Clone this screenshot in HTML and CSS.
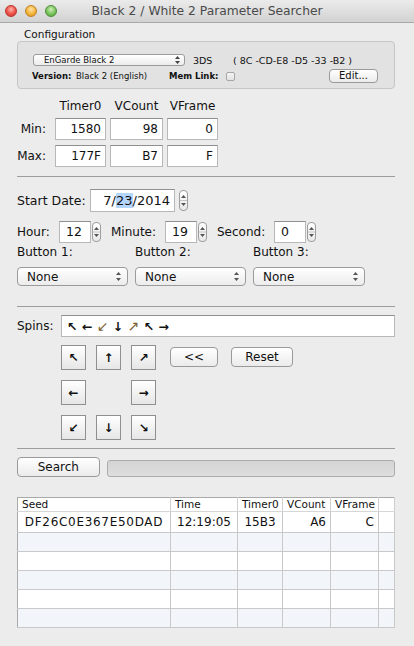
FILE: index.html
```html
<!DOCTYPE html>
<html lang="en">
<head>
    <meta charset="UTF-8">
    <meta name="viewport" content="width=device-width, initial-scale=1.0">
    <title>Black 2 / White 2 Parameter Searcher</title>
    <link rel="stylesheet" href="styles.css">
</head>
<body>
    <div class="window">
        <div class="titlebar">
            <div class="lights">
                <span class="light red"></span>
                <span class="light yellow"></span>
                <span class="light green"></span>
            </div>
            <div class="title">Black 2 / White 2 Parameter Searcher</div>
        </div>

        <div class="content">
            <!-- Configuration -->
            <div class="config-label">Configuration</div>
            <div class="config-box">
                <div class="config-row">
                    <div class="popup mini">
                        <span>EnGarde Black 2</span>
                        <svg class="updown" width="5" height="8" viewBox="0 0 5 8"><path d="M2.5 0 L5 3 L0 3 Z M0 5 L5 5 L2.5 8 Z" fill="#444"/></svg>
                    </div>
                    <span class="ds">3DS</span>
                    <span class="mac">( 8C -CD-E8 -D5 -33 -B2 )</span>
                </div>
                <div class="config-row second">
                    <span class="bold version-label">Version:</span>
                    <span class="version-value">Black 2 (English)</span>
                    <span class="bold mem-label">Mem Link:</span>
                    <span class="checkbox"></span>
                    <button class="btn mini edit">Edit...</button>
                </div>
            </div>

            <!-- Timer0 / VCount / VFrame -->
            <div class="timers">
                <span></span>
                <span class="head">Timer0</span>
                <span class="head">VCount</span>
                <span class="head">VFrame</span>

                <span class="row-label">Min:</span>
                <span class="field num">1580</span>
                <span class="field num">98</span>
                <span class="field num">0</span>

                <span class="row-label">Max:</span>
                <span class="field num">177F</span>
                <span class="field num">B7</span>
                <span class="field num">F</span>
            </div>

            <div class="sep"></div>

            <!-- Date and time -->
            <div class="row date-row">
                <span class="lbl date-lbl">Start Date:</span>
                <span class="field date">7/<span class="sel">23</span>/2014</span>
                <span class="stepper tall"><svg width="7" height="19" viewBox="0 0 7 19"><path d="M3.5 4 L6 7 L1 7 Z M1 12 L6 12 L3.5 15 Z" fill="#555"/><path d="M0 9.5 H7" stroke="#c4c4c4"/></svg></span>
            </div>

            <div class="row time-row">
                <span class="lbl hour-lbl">Hour:</span>
                <span class="field small">12</span>
                <span class="stepper"><svg width="7" height="18" viewBox="0 0 7 18"><path d="M3.5 4 L6 7 L1 7 Z M1 11 L6 11 L3.5 14 Z" fill="#555"/><path d="M0 9 H7" stroke="#c4c4c4"/></svg></span>
                <span class="lbl minute-lbl">Minute:</span>
                <span class="field small">19</span>
                <span class="stepper"><svg width="7" height="18" viewBox="0 0 7 18"><path d="M3.5 4 L6 7 L1 7 Z M1 11 L6 11 L3.5 14 Z" fill="#555"/><path d="M0 9 H7" stroke="#c4c4c4"/></svg></span>
                <span class="lbl second-lbl">Second:</span>
                <span class="field small">0</span>
                <span class="stepper"><svg width="7" height="18" viewBox="0 0 7 18"><path d="M3.5 4 L6 7 L1 7 Z M1 11 L6 11 L3.5 14 Z" fill="#555"/><path d="M0 9 H7" stroke="#c4c4c4"/></svg></span>
            </div>

            <div class="buttons">
                <span class="lbl">Button 1:</span>
                <span class="lbl">Button 2:</span>
                <span class="lbl">Button 3:</span>
                <div class="popup">
                    <span>None</span>
                    <svg class="updown" width="5" height="9" viewBox="0 0 5 9"><path d="M2.5 0 L5 3 L0 3 Z M0 6 L5 6 L2.5 9 Z" fill="#555"/></svg>
                </div>
                <div class="popup">
                    <span>None</span>
                    <svg class="updown" width="5" height="9" viewBox="0 0 5 9"><path d="M2.5 0 L5 3 L0 3 Z M0 6 L5 6 L2.5 9 Z" fill="#555"/></svg>
                </div>
                <div class="popup">
                    <span>None</span>
                    <svg class="updown" width="5" height="9" viewBox="0 0 5 9"><path d="M2.5 0 L5 3 L0 3 Z M0 6 L5 6 L2.5 9 Z" fill="#555"/></svg>
                </div>
            </div>

            <div class="sep second-sep"></div>

            <!-- Spins -->
            <div class="row spins-row">
                <span class="lbl spins-lbl">Spins:</span>
                <span class="field spins">↖ ← <span class="thin">↙</span> ↓ <span class="thin">↗</span> ↖ →</span>
            </div>

            <div class="spin-controls">
                <div class="pad">
                    <button class="arrow">↖</button>
                    <button class="arrow">↑</button>
                    <button class="arrow">↗</button>
                    <button class="arrow">←</button>
                    <span></span>
                    <button class="arrow">→</button>
                    <button class="arrow">↙</button>
                    <button class="arrow">↓</button>
                    <button class="arrow">↘</button>
                </div>
                <button class="btn back">&lt;&lt;</button>
                <button class="btn reset">Reset</button>
            </div>

            <div class="sep third-sep"></div>

            <!-- Search -->
            <div class="search-row">
                <button class="btn search">Search</button>
                <div class="progress"></div>
            </div>

            <!-- Results -->
            <table class="results">
                <colgroup>
                    <col style="width: 153px">
                    <col style="width: 67px">
                    <col style="width: 45px">
                    <col style="width: 48px">
                    <col style="width: 48px">
                    <col>
                </colgroup>
                <thead>
                    <tr>
                        <th>Seed</th>
                        <th>Time</th>
                        <th>Timer0</th>
                        <th>VCount</th>
                        <th>VFrame</th>
                        <th></th>
                    </tr>
                </thead>
                <tbody>
                    <tr class="first">
                        <td class="center seed">DF26C0E367E50DAD</td>
                        <td class="center">12:19:05</td>
                        <td class="center">15B3</td>
                        <td class="right">A6</td>
                        <td class="right">C</td>
                        <td></td>
                    </tr>
                    <tr><td></td><td></td><td></td><td></td><td></td><td></td></tr>
                    <tr><td></td><td></td><td></td><td></td><td></td><td></td></tr>
                    <tr><td></td><td></td><td></td><td></td><td></td><td></td></tr>
                    <tr><td></td><td></td><td></td><td></td><td></td><td></td></tr>
                    <tr><td></td><td></td><td></td><td></td><td></td><td></td></tr>
                </tbody>
            </table>
        </div>
    </div>
</body>
</html>
```

FILE: styles.css
```css
body {
    margin: 0;
    padding: 0;
    background-color: #ececec;
    font-family: "DejaVu Sans", "Liberation Sans", sans-serif;
    font-size: 12px;
    color: #111;
}
.window {
    width: 414px;
    height: 646px;
    overflow: hidden;
    background-color: #ececec;
}

/* Title bar */
.titlebar {
    display: flex;
    align-items: center;
    height: 22px;
    padding: 0 60px 0 5px;
    background: linear-gradient(#ebebeb, #d2d2d2);
    border-bottom: 1px solid #a9a9a9;
}
.lights {
    display: flex;
    gap: 8px;
    width: 55px;
}
.light {
    width: 12px;
    height: 12px;
    border-radius: 50%;
    box-sizing: border-box;
}
.light.red {
    background: radial-gradient(circle at 50% 35%, #ffb3ad, #ec4f47 55%, #c93a33);
    border: 1px solid #b9342e;
}
.light.yellow {
    background: radial-gradient(circle at 50% 35%, #ffe2a8, #f3b43b 55%, #d38f19);
    border: 1px solid #c08224;
}
.light.green {
    background: radial-gradient(circle at 50% 35%, #cfeeb9, #79c35c 55%, #4e9e37);
    border: 1px solid #4b8e36;
}
.title {
    flex: 1;
    text-align: center;
    font-size: 12.3px;
    color: #4a4a4a;
}

.content {
    width: 378px;
    padding-left: 17px;
}

/* Configuration */
.config-label {
    margin-top: 5px;
    padding-left: 7px;
    font-size: 10.5px;
    line-height: 13px;
}
.config-box {
    box-sizing: border-box;
    height: 48px;
    padding: 12px 16px 0 15px;
    background-color: #e2e2e2;
    border: 1px solid #c6c6c6;
    border-radius: 4px;
    font-size: 8.5px;
}
.config-row {
    display: flex;
    align-items: center;
    height: 12px;
}
.config-row.second {
    height: 14px;
    margin-top: 3px;
}
.bold {
    font-weight: bold;
}
.ds {
    margin-left: 8px;
    width: 40px;
    font-size: 9.5px;
}
.mac {
    white-space: pre;
    font-size: 9.5px;
}
.version-label {
    width: 44px;
    margin-left: -1px;
}
.version-value {
    width: 93px;
}
.mem-label {
    width: 57px;
}
.checkbox {
    width: 9px;
    height: 9px;
    box-sizing: border-box;
    border: 1px solid #a6a6a6;
    border-radius: 2px;
    background: linear-gradient(#f4f4f4, #e4e4e4);
}

/* Pop-up buttons */
.popup {
    display: flex;
    align-items: center;
    justify-content: space-between;
    box-sizing: border-box;
    height: 19px;
    padding: 0 6px 0 9px;
    background: linear-gradient(#ffffff, #ececec);
    border: 1px solid #9b9b9b;
    border-radius: 4px;
    font-size: 12px;
}
.popup.mini {
    width: 152px;
    height: 12px;
    padding: 0 4px 0 10px;
    border-radius: 3px;
    font-size: 8.5px;
}

/* Push buttons */
.btn {
    box-sizing: border-box;
    height: 20px;
    padding: 0;
    font-family: inherit;
    font-size: 12px;
    color: #111;
    background: linear-gradient(#ffffff, #ebebeb);
    border: 1px solid #9a9a9a;
    border-radius: 4px;
}
.btn.mini {
    height: 14px;
    font-size: 10px;
    line-height: 12px;
}
.edit {
    width: 49px;
    margin-left: auto;
}

/* Timer grid */
.timers {
    display: grid;
    grid-template-columns: 34px 51px 53px 51px;
    grid-template-rows: 14px 22px 22px;
    column-gap: 4px;
    row-gap: 5px;
    margin-top: 10px;
}
.head {
    text-align: center;
    line-height: 14px;
}
.row-label {
    text-align: right;
    padding-right: 5px;
    line-height: 22px;
}
.field {
    box-sizing: border-box;
    background-color: #fff;
    border: 1px solid #b8b8b8;
    border-top-color: #8f8f8f;
    line-height: 20px;
}
.field.num {
    text-align: right;
    padding-right: 4px;
}

.sep {
    margin-top: 9px;
    border-top: 1px solid #9c9c9c;
}
.second-sep {
    margin-top: 20px;
}
.third-sep {
    margin-top: 8px;
}

/* Rows */
.row {
    display: flex;
    align-items: center;
}
.date-row {
    margin-top: 12px;
    height: 23px;
}
.date-lbl {
    width: 73px;
    font-size: 12.5px;
}
.field.date {
    width: 85px;
    height: 23px;
    text-align: right;
    padding-right: 4px;
    line-height: 21px;
    font-size: 13px;
}
.sel {
    background-color: #b4d5fe;
}
.stepper {
    display: flex;
    box-sizing: border-box;
    width: 9px;
    height: 20px;
    margin-left: 1px;
    background: linear-gradient(#ffffff, #e8e8e8);
    border: 1px solid #9d9d9d;
    border-radius: 4px;
    overflow: hidden;
}
.stepper.tall {
    height: 21px;
    margin-left: 4px;
}
.time-row {
    margin-top: 9px;
    height: 22px;
}
.field.small {
    width: 32px;
    height: 22px;
    padding-left: 6px;
    font-size: 12.5px;
}
.hour-lbl {
    width: 42px;
}
.minute-lbl {
    width: 54px;
    margin-left: 10px;
}
.second-lbl {
    width: 57px;
    margin-left: 10px;
}

.buttons {
    display: grid;
    grid-template-columns: 111px 111px 112px;
    column-gap: 7px;
    margin-top: 2px;
}
.buttons .lbl {
    line-height: 14px;
    margin-bottom: 8px;
}

/* Spins */
.spins-row {
    margin-top: 8px;
    height: 22px;
}
.spins-lbl {
    width: 44px;
}
.field.spins {
    flex: 1;
    height: 22px;
    padding-left: 5px;
    font-size: 12.5px;
    font-weight: bold;
}
.thin {
    color: #7a6232;
    font-weight: normal;
    font-size: 14px;
}
.spin-controls {
    display: flex;
    align-items: flex-start;
    margin-top: 8px;
    padding-left: 44px;
}
.pad {
    display: grid;
    grid-template-columns: repeat(3, 25px);
    grid-template-rows: repeat(3, 25px);
    gap: 10px;
}
.arrow {
    box-sizing: border-box;
    padding: 0;
    font-family: inherit;
    font-size: 12px;
    font-weight: bold;
    color: #111;
    background: linear-gradient(#ffffff, #e6e6e6);
    border: 1px solid #8f8f8f;
}
.back {
    width: 48px;
    margin: 2px 0 0 14px;
}
.reset {
    width: 62px;
    margin: 2px 0 0 13px;
}

/* Search */
.search-row {
    display: flex;
    align-items: flex-end;
    margin-top: 8px;
}
.search {
    width: 83px;
}
.progress {
    box-sizing: border-box;
    width: 290px;
    height: 17px;
    margin-left: 7px;
    background: linear-gradient(#d4d4d4, #dedede);
    border: 1px solid #acacac;
    border-radius: 3px;
}

/* Results table */
.results {
    width: 378px;
    margin-top: 20px;
    table-layout: fixed;
    border-collapse: collapse;
    border: 1px solid #a9a9a9;
    background-color: #fff;
}
.results th {
    height: 13px;
    padding: 0 0 0 4px;
    font-size: 10.5px;
    font-weight: normal;
    text-align: left;
    line-height: 13px;
    border-right: 1px solid #cfcfcf;
    border-bottom: 1px solid #d6d6d6;
    white-space: nowrap;
    overflow: hidden;
}
.results td {
    height: 18px;
    padding: 0 4px;
    border-right: 1px solid #c9c9c9;
    border-bottom: 1px solid #c9c9c9;
    white-space: nowrap;
}
.results tr.first td {
    height: 20px;
}
.results td.seed {
    letter-spacing: 0.7px;
}
.results tbody tr:nth-child(even) td {
    background-color: #f2f5fa;
}
.center {
    text-align: center;
}
.right {
    text-align: right;
}
```
